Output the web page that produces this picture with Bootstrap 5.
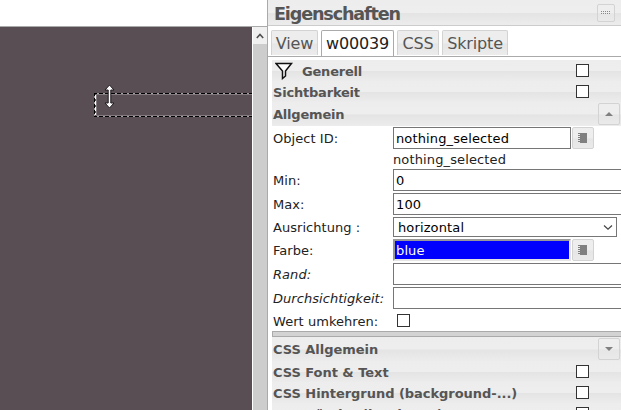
<!DOCTYPE html>
<html lang="de">
<head>
<meta charset="utf-8">
<meta name="viewport" content="width=device-width, initial-scale=1">
<title>Eigenschaften</title>
<link rel="stylesheet" href="https://cdn.jsdelivr.net/npm/bootstrap@5.3.0/dist/css/bootstrap.min.css">
<style>
body{width:621px;height:410px;font-family:"DejaVu Sans",sans-serif;font-size:13px;line-height:18px;color:#222;background:#fff}
.editor{width:267px}
.editor-top{height:27px;border-bottom:1px solid #aaa}
.stage{background:#584e54;width:252px}
.selection{left:94px;top:66px;width:158px;height:24px}
.resize-cursor{left:104px;top:57px}
.vscroll{width:14px;margin-left:1px;background:#cdcdcd}
.vscroll-up{height:17px;background:#f0f0f0}
.props{border-left:1px solid #aaa;width:354px}
.shade{background:linear-gradient(#ededed 0,#eee 50%,#e4e4e4 54%,#ececec 100%)}
.title-row{height:26px;border-bottom:1px solid #ccc;padding:0 6px;color:#555}
.title-row h1{font-size:17.6px;line-height:26px;letter-spacing:-1.15px;padding-top:1px}
.mini{border:1px solid #d3d3d3;border-radius:2px;background:linear-gradient(#eee 50%,#e6e6e6 54%,#eaeaea);flex:none;width:22px;height:22px;padding:0;display:flex;align-items:center;justify-content:center}
.mini-sm{width:18px;height:18px;margin-top:4px}
.tabs{height:31px;padding:4px 3px 0;gap:3px;border-bottom:1px solid #aaa}
.tabs .nav-link{height:25px;padding:0;border:1px solid #d3d3d3;border-bottom:0;border-radius:2px 2px 0 0;background:linear-gradient(#ededed 50%,#e5e5e5 54%,#ececec);color:#555;font-size:16px;line-height:25px;letter-spacing:-.15px;text-align:center}
.tabs .nav-link.active{height:26px;background:#fff;border-color:#aaa;color:#212121}
.group{color:#555;font-weight:700;padding-left:1px;height:21px;flex:none;letter-spacing:-.2px}
.css-group{letter-spacing:-.04px}
.group>span{padding-top:3px}
.box{appearance:none;width:13px;height:13px;margin:0;border:1px solid #333;border-radius:0;background:#fff;flex:none}
.group .box{margin-right:32px}
.lbl{width:121px;padding-left:1px;padding-top:2px;flex:none;white-space:nowrap;letter-spacing:.05px}
.field{border:1px solid #767676;border-radius:0;height:22px;padding:1px 2px 0;font-size:13px;line-height:20px;letter-spacing:.13px;background:#fff;color:#000;outline:0}
.short{width:178px}
.pick{width:224px;height:20px;padding:1px 3px 0 4px}
.color-field{background:#00f;color:#fff;border:2px solid;border-color:#999 #e5e5e5 #e5e5e5 #999;line-height:18px;padding:0 1px}
.split{height:6px;background:#d3d3d3;border:1px solid #aaa;border-right:0;flex:none}
.prow{flex:none;display:flex;align-items:center;height:24px}
</style>
<script src="https://cdn.jsdelivr.net/npm/bootstrap@5.3.0/dist/js/bootstrap.bundle.min.js"></script>
</head>
<body class="d-flex overflow-hidden">
<section class="editor d-flex flex-column flex-shrink-0">
  <div class="editor-top flex-shrink-0"></div>
  <div class="d-flex flex-grow-1">
    <div class="stage position-relative">
      <svg class="selection position-absolute" shape-rendering="crispEdges" fill="none"><path d="M0 .5H158M.5 0V24M0 23.5H158" stroke="#000"/><path d="M3 .5H158M.5 3V24M3 23.5H158" stroke="#a49ea1" stroke-dasharray="2 4"/><path d="M2 1.5H158M2 22.5H158M2.5 2V22" stroke="#857c81"/><path d="M1.5 2V22" stroke="#fff" stroke-dasharray="4 2"/></svg>
      <svg class="resize-cursor position-absolute" width="11" height="26"><path d="M5.5 1 10 6H6.8V19H10L5.5 24 1 19H4.2V6H1Z" fill="#fff" stroke="#211c20" stroke-width="1"/></svg>
    </div>
    <div class="vscroll"><div class="vscroll-up d-flex justify-content-center align-items-center"><svg width="8" height="6"><path d="M.8 5 4 1.5 7.2 5" fill="none" stroke="#505050" stroke-width="1.6"/></svg></div></div>
  </div>
</section>
<aside class="props d-flex flex-column flex-shrink-0">
  <header class="title-row shade d-flex justify-content-between flex-shrink-0">
    <h1 class="fw-bold m-0">Eigenschaften</h1>
    <button class="mini mini-sm"><svg width="10" height="4" shape-rendering="crispEdges"><path d="M0 .5H10M0 2.5H10" stroke="#888" stroke-dasharray="1 1"/></svg></button>
  </header>
  <nav class="nav tabs flex-nowrap flex-shrink-0">
    <a class="nav-link" style="width:47px">View</a>
    <a class="nav-link active" style="width:73px">w00039</a>
    <a class="nav-link" style="width:42px">CSS</a>
    <a class="nav-link" style="width:66px">Skripte</a>
  </nav>
  <div class="d-flex flex-column flex-grow-1 ps-1" style="padding-top:3px">
    <div class="group shade d-flex align-items-center"><svg width="18" height="18" style="margin:0 9px 0 2px"><path d="M1 1.5H16.5L10.5 9V14L7.5 16.5V9Z" fill="#fff" stroke="#111" stroke-width="1.5"/></svg><span>Generell</span><input type="checkbox" class="box ms-auto"></div>
    <div class="group shade d-flex align-items-center justify-content-between"><span>Sichtbarkeit</span><input type="checkbox" class="box"></div>
    <div class="group shade d-flex align-items-center justify-content-between" style="height:24px"><span style="padding-top:2px">Allgemein</span><button class="mini" style="margin-right:1px"><svg width="8" height="4"><path d="M0 4 4 0 8 4Z" fill="#808080"/></svg></button></div>
    <div class="prow"><label class="lbl">Object ID:</label><input class="field short" value="nothing_selected"><button class="mini" style="margin-left:1px"><svg width="10" height="10" shape-rendering="crispEdges"><path d="M2 0H9V10H2Z" fill="#808080"/><path d="M1 0V10" stroke="#808080" stroke-width="2" stroke-dasharray="1 1"/></svg></button></div>
    <div class="prow" style="height:18px"><span class="lbl"></span><span style="padding-top:2px;letter-spacing:.13px">nothing_selected</span></div>
    <div class="prow"><label class="lbl">Min:</label><input class="field flex-grow-1 border-end-0" value="0"></div>
    <div class="prow"><label class="lbl">Max:</label><input class="field flex-grow-1 border-end-0" value="100"></div>
    <div class="prow" style="height:22px"><label class="lbl">Ausrichtung :</label><div class="field pick d-flex align-items-center justify-content-between"><span>horizontal</span><svg width="10" height="7"><path d="M1 1.5 5 5.2 9 1.5" fill="none" stroke="#444" stroke-width="1.2"/></svg></div></div>
    <div class="prow"><label class="lbl">Farbe:</label><input class="field color-field short" value="blue"><button class="mini" style="margin-left:1px"><svg width="10" height="10" shape-rendering="crispEdges"><path d="M2 0H9V10H2Z" fill="#808080"/><path d="M1 0V10" stroke="#808080" stroke-width="2" stroke-dasharray="1 1"/></svg></button></div>
    <div class="prow"><label class="lbl fst-italic">Rand:</label><input class="field flex-grow-1 border-end-0"></div>
    <div class="prow"><label class="lbl fst-italic">Durchsichtigkeit:</label><input class="field flex-grow-1 border-end-0"></div>
    <div class="prow" style="height:21px"><label class="lbl">Wert umkehren:</label><input type="checkbox" class="box" style="margin-left:4px"></div>
    <div class="split"></div>
    <div class="group css-group shade d-flex align-items-center justify-content-between" style="height:24px"><span style="padding-top:1px">CSS Allgemein</span><button class="mini" style="margin-right:1px"><svg width="8" height="4"><path d="M0 0 4 4 8 0Z" fill="#808080"/></svg></button></div>
    <div class="group css-group shade d-flex align-items-center justify-content-between"><span>CSS Font &amp; Text</span><input type="checkbox" class="box"></div>
    <div class="group css-group shade d-flex align-items-center justify-content-between"><span>CSS Hintergrund (background-...)</span><input type="checkbox" class="box"></div>
    <div class="group css-group shade d-flex align-items-center justify-content-between"><span>CSS Ränder (border-...)</span><input type="checkbox" class="box"></div>
  </div>
</aside>
</body>
</html>
